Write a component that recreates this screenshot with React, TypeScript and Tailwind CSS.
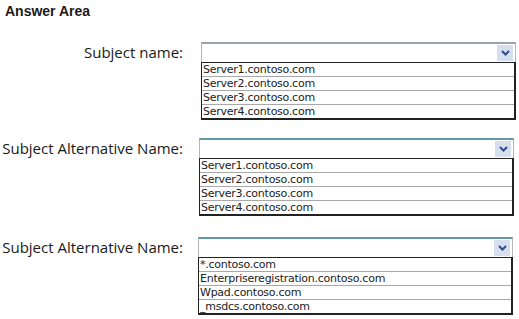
const sections = [
  {
    label: "Subject name:",
    left: "ml-[18px]",
    top: "mt-[21px]",
    topBorder: "border-t-[#9aa3ab]",
    options: ["Server1.contoso.com", "Server2.contoso.com", "Server3.contoso.com", "Server4.contoso.com"],
  },
  {
    label: "Subject Alternative Name:",
    left: "ml-[16px]",
    top: "mt-[18px]",
    topBorder: "border-t-[#5f9aa6]",
    options: ["Server1.contoso.com", "Server2.contoso.com", "Server3.contoso.com", "Server4.contoso.com"],
  },
  {
    label: "Subject Alternative Name:",
    left: "ml-[15px]",
    top: "mt-[21px]",
    topBorder: "border-t-[#5f9aa6]",
    options: ["*.contoso.com", "Enterpriseregistration.contoso.com", "Wpad.contoso.com", "_msdcs.contoso.com"],
  },
];

function Chevron() {
  return (
    <svg width="9" height="6" viewBox="0 0 9 6" aria-hidden="true">
      <path d="M1 1 L4.5 4.5 L8 1" fill="none" stroke="#2d4d86" strokeWidth="2" />
    </svg>
  );
}

export default function App() {
  return (
    <div className="h-[319px] w-[519px] overflow-hidden bg-white font-['Open_Sans','Noto_Sans',sans-serif] text-[#1a1a1a]">
      <h1 className="pl-[5px] pt-[1px] font-['Liberation_Sans',sans-serif] text-[14px] font-bold leading-[20px]">
        Answer Area
      </h1>
      {sections.map((s, i) => (
        <div key={i} className={`flex ${s.top}`}>
          <div className="flex h-[21px] w-[183px] shrink-0 items-center justify-end text-[15px] leading-none">
            {s.label}
          </div>
          <div className={`${s.left} w-[315px]`}>
            <div
              className={`flex h-[20px] items-center justify-end border border-b-0 border-[#b4b8bc] border-t-2 ${s.topBorder} bg-white pr-[2px]`}
            >
              <span className="flex h-[16px] w-[16px] items-center justify-center bg-[#d7deee]">
                <Chevron />
              </span>
            </div>
            <ul className="border border-r-2 border-b-2 border-[#222] bg-white font-['DejaVu_Sans',sans-serif] text-[11px] tracking-[-0.25px] text-[#222]">
              {s.options.map((o, j) => (
                <li
                  key={o}
                  className={`pl-[1px] ${j < 3 ? "h-[14px] border-b border-[#a8a8a8] leading-[13px]" : "h-[13px] leading-[13px]"}`}
                >
                  {o}
                </li>
              ))}
            </ul>
          </div>
        </div>
      ))}
    </div>
  );
}
